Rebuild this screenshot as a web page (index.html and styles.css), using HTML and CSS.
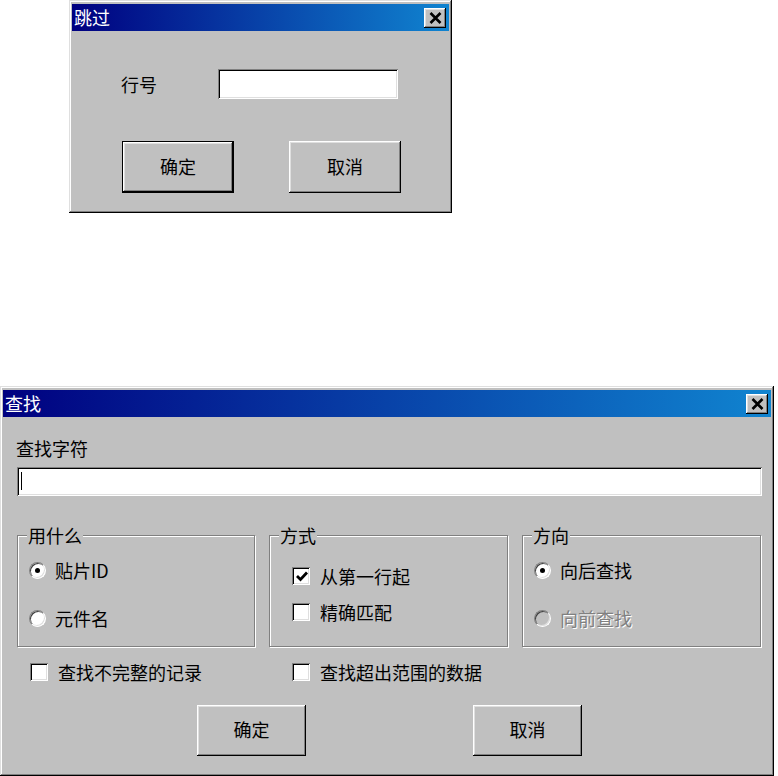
FILE: index.html
```html
<!DOCTYPE html>
<html lang="zh-CN">
<head>
<meta charset="UTF-8"/>
<link rel="stylesheet" href="styles.css">
</head>
<body>

<div class="dialog dialog-goto">
	<div class="titlebar">
		<span class="title">跳过</span>
		<span class="close"><svg width="13" height="12" viewBox="0 0 13 12"><path d="M1.5 1 L11.5 11 M11.5 1 L1.5 11" stroke="#000" stroke-width="2.6" fill="none"/></svg></span>
	</div>
	<div class="goto-row">
		<span class="goto-label">行号</span>
		<span class="field goto-field"></span>
	</div>
	<div class="btn-row goto-buttons">
		<span class="btn btn-default">确定</span>
		<span class="btn">取消</span>
	</div>
</div>

<div class="dialog dialog-find">
	<div class="titlebar">
		<span class="title">查找</span>
		<span class="close"><svg width="13" height="12" viewBox="0 0 13 12"><path d="M1.5 1 L11.5 11 M11.5 1 L1.5 11" stroke="#000" stroke-width="2.6" fill="none"/></svg></span>
	</div>
	<div class="find-label">查找字符</div>
	<div class="field find-field"><span class="caret"></span></div>

	<div class="groups">
		<div class="group group-radio">
			<span class="legend">用什么</span>
			<div class="option"><span class="radio checked"></span>贴片ID</div>
			<div class="option"><span class="radio"></span>元件名</div>
		</div>
		<div class="group group-check">
			<span class="legend">方式</span>
			<div class="option"><span class="check"><svg width="12" height="11" viewBox="0 0 12 11"><path d="M1 5 L4.5 8.5 L11 1.5" stroke="#000" stroke-width="2.8" fill="none"/></svg></span>从第一行起</div>
			<div class="option"><span class="check"></span>精确匹配</div>
		</div>
		<div class="group group-radio">
			<span class="legend">方向</span>
			<div class="option"><span class="radio checked"></span>向后查找</div>
			<div class="option disabled"><span class="radio"></span>向前查找</div>
		</div>
	</div>

	<div class="extra-row">
		<div class="option extra-first"><span class="check"></span>查找不完整的记录</div>
		<div class="option"><span class="check"></span>查找超出范围的数据</div>
	</div>

	<div class="btn-row find-buttons">
		<span class="btn">确定</span>
		<span class="btn">取消</span>
	</div>
</div>

</body>
</html>
```

FILE: styles.css
```css
body {
	margin:0;
	background:#fff;
	font-family:"Noto Sans CJK SC", "Noto Sans", sans-serif;
	font-size:18px;
	color:#000;
}

.dialog {
	box-sizing:border-box;
	background:#c0c0c0;
	padding:4px 3px 3px 3px;
	box-shadow:inset -1px -1px #000, inset 1px 1px #dfdfdf, inset -2px -2px #808080, inset 2px 2px #fff;
}

.dialog-goto {
	margin-left:69px;
	width:383px;
	height:213px;
}

.dialog-find {
	margin-top:173px;
	width:774px;
	height:390px;
}

.titlebar {
	height:27px;
	display:flex;
	align-items:center;
	justify-content:space-between;
	padding:0 3px 0 2px;
	background:linear-gradient(to right, #000080, #1084d0);
}

.title {
	color:#fff;
	line-height:27px;
}

.close {
	width:22px;
	height:20px;
	display:flex;
	align-items:center;
	justify-content:center;
	background:#c0c0c0;
	box-shadow:inset -1px -1px #000, inset 1px 1px #fff, inset -2px -2px #808080, inset 2px 2px #dfdfdf;
}

.field {
	display:block;
	box-sizing:border-box;
	background:#fff;
	box-shadow:inset 1px 1px #808080, inset -1px -1px #fff, inset 2px 2px #000, inset -2px -2px #dfdfdf;
}

/* goto dialog */
.goto-row {
	display:flex;
	align-items:center;
	margin-top:38px;
	padding-left:49px;
}

.goto-label {
	width:97px;
}

.goto-field {
	width:180px;
	height:30px;
}

.btn-row {
	display:flex;
}

.goto-buttons {
	margin-top:42px;
	padding-left:50px;
	gap:55px;
}

.goto-buttons .btn {
	width:112px;
	height:52px;
}

.btn {
	display:flex;
	align-items:center;
	justify-content:center;
	box-sizing:border-box;
	padding-bottom:3px;
	background:#c0c0c0;
	box-shadow:inset -1px -1px #000, inset 1px 1px #fff, inset -2px -2px #808080, inset 2px 2px #dfdfdf;
}

.btn-default {
	box-shadow:inset 0 0 0 1px #000, inset -2px -2px #000, inset 2px 2px #fff, inset -3px -3px #808080, inset 3px 3px #dfdfdf;
}

/* find dialog */
.find-label {
	margin-top:18px;
	padding-left:13px;
	line-height:26px;
}

.find-field {
	margin:6px 0 0 14px;
	width:745px;
	height:29px;
	padding:5px 0 0 4px;
}

.caret {
	display:block;
	width:1px;
	height:18px;
	background:#000;
}

.groups {
	display:flex;
	gap:14px;
	margin:39px 0 0 14px;
}

.group {
	position:relative;
	box-sizing:border-box;
	width:239px;
	height:112px;
	border:1px solid #808080;
	box-shadow:1px 1px #fff, inset 1px 1px #fff;
	display:flex;
	flex-direction:column;
}

.group:first-child {
	width:238px;
}

.legend {
	position:absolute;
	top:-12px;
	left:9px;
	padding:0 1px;
	line-height:22px;
	background:#c0c0c0;
}

.group-radio {
	padding:19px 0 0 11px;
	gap:18px;
}

.group-check {
	padding:25px 0 0 22px;
	gap:6px;
}

.option {
	display:flex;
	align-items:center;
	height:30px;
}

.radio {
	position:relative;
	box-sizing:border-box;
	width:17px;
	height:17px;
	margin-right:9px;
	border-radius:50%;
	border:1px solid;
	border-color:#808080 #fff #fff #808080;
	background:#fff;
	box-shadow:inset 1px 1px #404040, inset -1px -1px #dfdfdf;
}

.radio.checked::after {
	content:"";
	position:absolute;
	left:5px;
	top:5px;
	width:5px;
	height:5px;
	border-radius:50%;
	background:#000;
}

.disabled {
	color:#808080;
	text-shadow:1px 1px #fff;
}

.disabled .radio {
	background:#c0c0c0;
}

.check {
	display:flex;
	align-items:center;
	justify-content:center;
	box-sizing:border-box;
	width:18px;
	height:18px;
	margin-right:10px;
	background:#fff;
	box-shadow:inset 1px 1px #808080, inset -1px -1px #fff, inset 2px 2px #000, inset -2px -2px #dfdfdf;
}

.check svg {
	margin:1px 0 0 1px;
}

.extra-row {
	display:flex;
	margin:12px 0 0 27px;
}

.extra-first {
	width:262px;
}

.extra-row .option {
	height:26px;
}

.find-buttons {
	margin:20px 0 0 194px;
	gap:167px;
}

.find-buttons .btn {
	width:109px;
	height:51px;
}
```
